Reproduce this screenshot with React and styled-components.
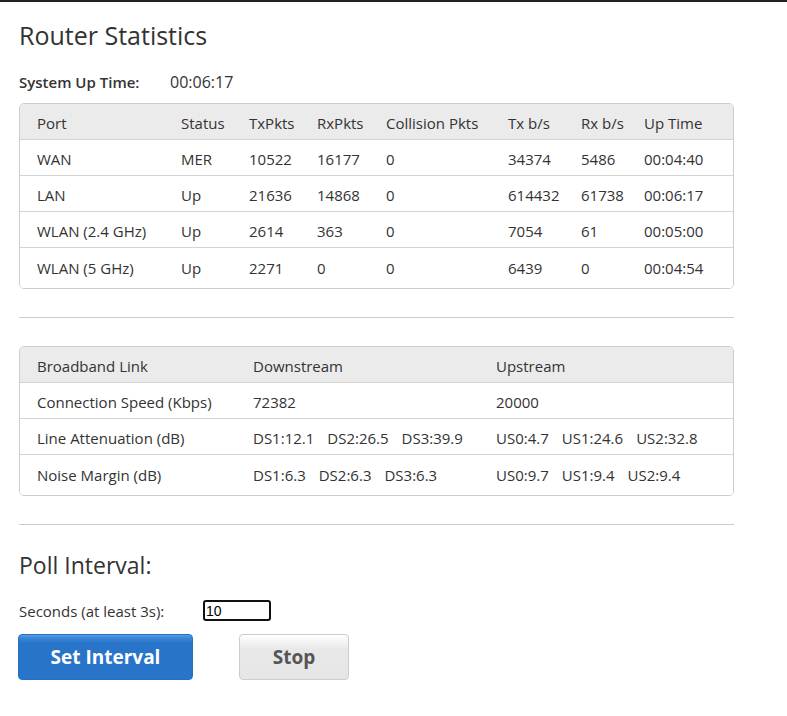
import React, { useState } from "react";
import styled, { createGlobalStyle } from "styled-components";

const GlobalStyle = createGlobalStyle`
  body {
    margin: 0;
    background: #fff;
    font-family: "Open Sans", "Noto Sans", Arial, sans-serif;
    color: #333;
  }
`;

const Page = styled.div`
  border-top: 2px solid #222;
  padding: 17px 53px 30px 19px;
`;

const Title = styled.h1`
  margin: 0;
  font-size: 25px;
  font-weight: 400;
  line-height: 32px;
`;

const UpTime = styled.div`
  display: flex;
  margin-top: 21px;
  font-size: 16px;
  line-height: 20px;
`;

const UpLabel = styled.span`
  font-weight: 600;
  font-size: 15px;
  width: 151px;
`;

const Panel = styled.div`
  margin-top: ${(p) => p.$top || 0}px;
  border: 1px solid #ccc;
  border-radius: 5px;
  overflow: hidden;
`;

const Row = styled.div`
  display: grid;
  grid-template-columns: ${(p) => p.$cols};
  align-items: center;
  box-sizing: border-box;
  height: ${(p) => (p.$head ? 35 : p.$last ? 41 : 36)}px;
  padding: ${(p) => (p.$last ? "4px 0 4px 17px" : "3px 0 0 17px")};
  font-size: 15px;
  background: ${(p) => (p.$head ? "#ebebeb" : "#fff")};
  border-top: ${(p) => (p.$head ? "none" : "1px solid #d4d4d4")};
  white-space: nowrap;
`;

const Multi = styled.div`
  display: flex;
  gap: 13px;
`;

const Rule = styled.hr`
  margin: ${(p) => p.$m};
  border: 0;
  border-top: 1px solid #ccc;
`;

const SubTitle = styled.h2`
  margin: 0;
  font-size: 23px;
  font-weight: 400;
  line-height: 30px;
`;

const Field = styled.div`
  display: flex;
  align-items: center;
  margin-top: 20px;
  font-size: 15px;
`;

const FieldLabel = styled.label`
  width: 184px;
`;

const Input = styled.input`
  width: 62px;
  height: 17px;
  border: 2px solid #111;
  border-radius: 3px;
  padding: 0 1px;
  font-size: 14px;
  font-family: Arial, sans-serif;
  outline: none;
`;

const Buttons = styled.div`
  display: flex;
  gap: 46px;
  margin-top: 13px;
`;

const Button = styled.button`
  height: 46px;
  width: ${(p) => p.$w}px;
  border-radius: 4px;
  font-family: "Open Sans", Arial, sans-serif;
  font-weight: 700;
  font-size: 19px;
  cursor: pointer;
  ${(p) =>
    p.$primary
      ? `
    margin-left: -1px;
    color: #fff;
    border: 1px solid #2370c4;
    background: linear-gradient(#5a9ee0 0, #3a86d6 3px, #2874c8 8px, #2874c8 100%);
  `
      : `
    color: #555;
    border: 1px solid #ccc;
    background: linear-gradient(#fff 0, #f6f6f6 6px, #e8e8e8 14px, #e6e6e6 100%);
  `}
`;

const portCols = "144px 68px 68px 69px 122px 73px 63px 1fr";
const linkCols = "216px 243px 1fr";

const ports = [
  ["WAN", "MER", "10522", "16177", "0", "34374", "5486", "00:04:40"],
  ["LAN", "Up", "21636", "14868", "0", "614432", "61738", "00:06:17"],
  ["WLAN (2.4 GHz)", "Up", "2614", "363", "0", "7054", "61", "00:05:00"],
  ["WLAN (5 GHz)", "Up", "2271", "0", "0", "6439", "0", "00:04:54"],
];

const links = [
  ["Connection Speed (Kbps)", ["72382"], ["20000"]],
  ["Line Attenuation (dB)", ["DS1:12.1", "DS2:26.5", "DS3:39.9"], ["US0:4.7", "US1:24.6", "US2:32.8"]],
  ["Noise Margin (dB)", ["DS1:6.3", "DS2:6.3", "DS3:6.3"], ["US0:9.7", "US1:9.4", "US2:9.4"]],
];

export default function App() {
  const [secs, setSecs] = useState("10");
  return (
    <Page>
      <GlobalStyle />
      <Title>Router Statistics</Title>
      <UpTime>
        <UpLabel>System Up Time:</UpLabel>
        <span>00:06:17</span>
      </UpTime>
      <Panel $top={11}>
        <Row $cols={portCols} $head>
          {["Port", "Status", "TxPkts", "RxPkts", "Collision Pkts", "Tx b/s", "Rx b/s", "Up Time"].map((h) => (
            <div key={h}>{h}</div>
          ))}
        </Row>
        {ports.map((r, i) => (
          <Row key={r[0]} $cols={portCols} $last={i === ports.length - 1}>
            {r.map((c, j) => (
              <div key={j}>{c}</div>
            ))}
          </Row>
        ))}
      </Panel>
      <Rule $m="28px 0 28px" />
      <Panel>
        <Row $cols={linkCols} $head>
          <div>Broadband Link</div>
          <div>Downstream</div>
          <div>Upstream</div>
        </Row>
        {links.map((r, i) => (
          <Row key={r[0]} $cols={linkCols} $last={i === links.length - 1}>
            <div>{r[0]}</div>
            <Multi>
              {r[1].map((v) => (
                <span key={v}>{v}</span>
              ))}
            </Multi>
            <Multi>
              {r[2].map((v) => (
                <span key={v}>{v}</span>
              ))}
            </Multi>
          </Row>
        ))}
      </Panel>
      <Rule $m="28px 0 25px" />
      <SubTitle>Poll Interval:</SubTitle>
      <Field>
        <FieldLabel>Seconds (at least 3s):</FieldLabel>
        <Input value={secs} onChange={(e) => setSecs(e.target.value)} />
      </Field>
      <Buttons>
        <Button $primary $w={175}>Set Interval</Button>
        <Button $w={110}>Stop</Button>
      </Buttons>
    </Page>
  );
}
